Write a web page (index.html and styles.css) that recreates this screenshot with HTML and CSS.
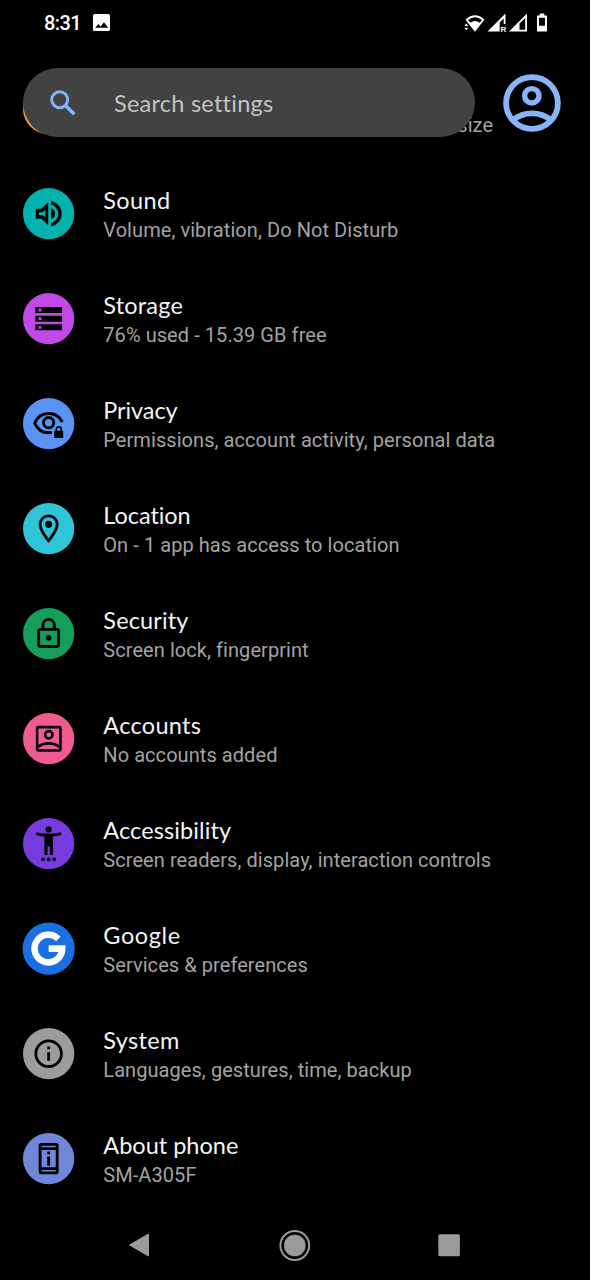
FILE: index.html
```html
<!DOCTYPE html>
<html lang="en">
<head>
<meta charset="utf-8">
<title>Settings</title>
<link rel="stylesheet" href="styles.css">
</head>
<body>
<div class="screen">
  <div class="status">
    <span class="clock">8:31</span>
    <svg class="picture" viewBox="0 0 16 16"><path fill="#fff" fill-rule="evenodd" d="M1.500 0h13A1.500 1.500 0 0 1 16 1.500v13a1.500 1.500 0 0 1-1.500 1.500h-13A1.500 1.500 0 0 1 0 14.500v-13A1.500 1.500 0 0 1 1.500 0zM2 13h12.300l-4-5.300-3 4-2.200-2.400z"/></svg>
    <svg class="signals" viewBox="0 0 86 20" fill="#fff">
      <path d="M1.500 6.500Q11-2.200 20.500 6.500L11 18.700 5.500 12z"/>
      <path fill="#000" d="M4 7Q11 1.500 18 7L15.700 9.700Q11 6.200 6.300 9.700z"/>
      <path d="M.3 13l2-2.500 2 2.500zM.3 14.700h4l-2 2.500z"/>
      <path fill-rule="evenodd" d="M23.500 18.500L41.500.5V11h-1.800V5.500l-4 4v9z"/>
      <text class="roaming" x="36.500" y="18.500">R</text>
      <path fill-rule="evenodd" d="M45 18.500L63 .5v18zM55.500 10.500V16.700h5.700V4.900z"/>
      <path fill-rule="evenodd" d="M73 2.500h2.700V.5h4.600v2H83v16H73zM75 4.800v8h6v-8z"/>
    </svg>
  </div>

  <div class="header">
    <div class="search">
      <svg class="magnifier" viewBox="0 0 26 26" fill="none" stroke="#8ab4f8"><circle cx="9.700" cy="9.700" r="8" stroke-width="2.900"/><path d="M15.500 15.500l8.800 8.800" stroke-width="3.400"/></svg>
      <span class="search-text">Search settings</span>
    </div>
    <svg class="avatar" viewBox="0 0 58 58" fill="none" stroke="#8ab4f8" stroke-width="5.800"><circle cx="29" cy="29" r="25.900"/><circle cx="28.800" cy="21.800" r="7.200" stroke-width="5.400"/><path d="M10.500 46Q18 39.300 29 39.300T47.500 46"/></svg>
  </div>

  <div class="list">
    <div class="row">
      <svg class="icon" viewBox="0 0 36 36"><circle cx="18" cy="18" r="18" fill="#f29a38"/></svg>
      <div class="label peek"><span class="sub">size</span></div>
    </div>
    <div class="row">
      <svg class="icon" viewBox="0 0 36 36"><circle cx="18" cy="18" r="18" fill="#03b1ae"/><path transform="translate(6 6)" d="M3 8.500v7h4l4.700 4.600V3.900L7 8.500H3zm6.700.8v5.400L7.830 13H5.200v-2h2.630zM16.500 12c0-1.770-1.020-3.290-2.800-4.030v8.050c1.780-.73 2.800-2.250 2.800-4.020zM13.700 3.200v2.300c2.890.86 5 3.340 5 6.500s-2.110 5.650-5 6.500v2.300c4.310-.91 7.500-4.490 7.500-8.800s-3.190-7.890-7.500-8.800z"/></svg>
      <div class="label"><span class="title t-sound">Sound</span><span class="sub">Volume, vibration, Do Not Disturb</span></div>
    </div>
    <div class="row">
      <svg class="icon" viewBox="0 0 36 36"><circle cx="18" cy="18" r="18" fill="#bf4ae6"/><path transform="translate(6 6)" fill-rule="evenodd" d="M2.600 3.800h18.800V8H2.600zM2.600 9.900h18.800v4.200H2.600zM2.600 16h18.800v4.200H2.600zM4.900 4.900v2h2v-2zM4.900 11v2h2v-2zM4.900 17.100v2h2v-2z"/></svg>
      <div class="label"><span class="title t-storage">Storage</span><span class="sub">76% used - 15.39 GB free</span></div>
    </div>
    <div class="row">
      <svg class="icon" viewBox="0 0 36 36"><circle cx="18" cy="18" r="18" fill="#5b93f5"/><g transform="translate(6 6)"><path fill="none" stroke="#000" stroke-width="2.100" d="M14.200 18.100Q12.800 18.400 12 18.400C7.500 18.400 4 15.700 2.200 11.600 4 7.500 7.500 4.900 12 4.900c4.200 0 7.700 2.200 9.600 6"/><circle cx="12" cy="11.300" r="3.600" fill="none" stroke="#000" stroke-width="2"/><path fill-rule="evenodd" d="M16 17h.8v-1a2.300 2.300 0 0 1 4.600 0v1h.8v5H16zM18 17h2.200v-1a1.100 1.100 0 0 0-2.200 0z"/></g></svg>
      <div class="label"><span class="title t-privacy">Privacy</span><span class="sub">Permissions, account activity, personal data</span></div>
    </div>
    <div class="row">
      <svg class="icon" viewBox="0 0 36 36"><circle cx="18" cy="18" r="18" fill="#2fc5d8"/><path transform="translate(6 6)" d="M12 2C8.130 2 5 5.130 5 9c0 5.250 7 13 7 13s7-7.750 7-13c0-3.870-3.130-7-7-7zM7 9c0-2.760 2.240-5 5-5s5 2.240 5 5c0 2.880-2.880 7.190-5 9.880C9.920 16.210 7 11.850 7 9zM12 6.500a2.500 2.500 0 1 0 0 5 2.500 2.500 0 0 0 0-5z"/></svg>
      <div class="label"><span class="title t-location">Location</span><span class="sub">On - 1 app has access to location</span></div>
    </div>
    <div class="row">
      <svg class="icon" viewBox="0 0 36 36"><circle cx="18" cy="18" r="18" fill="#149e5a"/><path transform="translate(6 6)" d="M18 8h-1V6c0-2.760-2.240-5-5-5S7 3.240 7 6v2H6c-1.100 0-2 .9-2 2v10c0 1.100.9 2 2 2h12c1.100 0 2-.9 2-2V10c0-1.100-.9-2-2-2zM9 6c0-1.660 1.340-3 3-3s3 1.340 3 3v2H9V6zm9 14H6V10h12v10zm-6-3c1.100 0 2-.9 2-2s-.9-2-2-2-2 .9-2 2 .9 2 2 2z"/></svg>
      <div class="label"><span class="title t-security">Security</span><span class="sub">Screen lock, fingerprint</span></div>
    </div>
    <div class="row">
      <svg class="icon" viewBox="0 0 36 36"><circle cx="18" cy="18" r="18" fill="#ef5a91"/><g transform="translate(6 6)" fill="none" stroke="#000" stroke-width="1.800"><rect x="3.900" y="3.900" width="16.400" height="16.400" rx=".8"/><circle cx="12.100" cy="9.300" r="2.600"/><path d="M4.300 17.900Q7.500 15.300 12 15.300t7.700 2.600"/></g></svg>
      <div class="label"><span class="title t-accounts">Accounts</span><span class="sub">No accounts added</span></div>
    </div>
    <div class="row">
      <svg class="icon" viewBox="0 0 36 36"><circle cx="18" cy="18" r="18" fill="#783be0"/><g transform="translate(6 6)"><path d="M20.500 4c-2.610.7-5.670 1-8.500 1S6.110 4.700 3.500 4L3 6c1.860.5 4 .83 6 1v13h2.200v-6h1.600v6H15V7c2-.17 4.140-.5 6-1z"/><circle cx="12" cy="2" r="2.200"/><circle cx="8.100" cy="23" r="1.350"/><circle cx="12" cy="23" r="1.350"/><circle cx="15.900" cy="23" r="1.350"/></g></svg>
      <div class="label"><span class="title t-accessibility">Accessibility</span><span class="sub">Screen readers, display, interaction controls</span></div>
    </div>
    <div class="row">
      <svg class="icon" viewBox="0 0 36 36"><circle cx="18" cy="18" r="18.300" fill="#1a6fe3"/><path fill="none" stroke="#fff" stroke-width="4.600" d="M24.800 11.200A9.700 9.700 0 1 0 27.500 18H18"/></svg>
      <div class="label"><span class="title t-google">Google</span><span class="sub">Services &amp; preferences</span></div>
    </div>
    <div class="row">
      <svg class="icon" viewBox="0 0 36 36"><circle cx="18" cy="18" r="18" fill="#9c9c9c"/><path transform="translate(6 6)" d="M11 7h2v2h-2zm0 4h2v6h-2zm1-9C6.480 2 2 6.480 2 12s4.480 10 10 10 10-4.480 10-10S17.520 2 12 2zm0 18c-4.410 0-8-3.590-8-8s3.590-8 8-8 8 3.590 8 8-3.590 8-8 8z"/></svg>
      <div class="label"><span class="title t-system">System</span><span class="sub">Languages, gestures, time, backup</span></div>
    </div>
    <div class="row">
      <svg class="icon" viewBox="0 0 36 36"><circle cx="18" cy="18" r="18" fill="#6f86d9"/><path transform="translate(6 6)" fill-rule="evenodd" d="M7 1h10a2 2 0 0 1 2 2v18a2 2 0 0 1-2 2H7a2 2 0 0 1-2-2V3a2 2 0 0 1 2-2zM7 2.900V4h10V2.900zM7 6v12h10V6zM7 20v1.100h10V20zM11 7h2v2h-2zM11 10.500h2V17h-2z"/></svg>
      <div class="label"><span class="title t-about">About phone</span><span class="sub">SM-A305F</span></div>
    </div>
  </div>

  <div class="nav">
    <svg class="nav-icon" viewBox="0 0 32 32"><path fill="#9b9b9b" stroke="#9b9b9b" stroke-linejoin="round" d="M6.500 16L25.500 5v22z"/></svg>
    <svg class="nav-icon" viewBox="0 0 32 32"><circle cx="16.800" cy="16.500" r="14.400" fill="none" stroke="#9b9b9b" stroke-width="2"/><circle cx="16.800" cy="16.500" r="10.800" fill="#9b9b9b"/></svg>
    <svg class="nav-icon" viewBox="0 0 32 32"><rect x="5.300" y="5.200" width="21.600" height="22" rx="1.500" fill="#9b9b9b"/></svg>
  </div>
</div>
</body>
</html>
```
FILE: styles.css
```css
* { box-sizing: border-box; }
body { margin: 0; background: #000; }
.screen {
  position: relative;
  display: flex;
  flex-direction: column;
  width: 590px;
  height: 1280px;
  overflow: hidden;
  background: #000;
  font-family: Roboto, sans-serif;
}
svg { display: block; flex: none; overflow: visible; }
.status {
  display: flex;
  align-items: center;
  height: 46px;
  padding: 0 40px 0 44px;
  color: #fff;
}
.clock {
  width: 49px;
  padding-top: 1px;
  font: 500 20px/24px Roboto, sans-serif;
  letter-spacing: -0.600px;
}
.picture { width: 17px; height: 17px; }
.signals { width: 86px; height: 20px; margin-left: auto; }
.roaming { font: 700 8px "Liberation Sans", sans-serif; }
/* Floats above the scrolled list */
.header {
  position: absolute;
  top: 68px;
  left: 23px;
  z-index: 1;
  display: flex;
  align-items: center;
  gap: 28px;
}
.search {
  display: flex;
  align-items: center;
  gap: 38px;
  width: 452px;
  height: 69px;
  padding-left: 27px;
  border-radius: 35px;
  background: #424242;
}
.magnifier { width: 26px; height: 26px; }
.search-text {
  color: #c3c3c3;
  font: 400 23.500px/30px Lato, sans-serif;
  letter-spacing: 0.250px;
  font-variant-ligatures: none;
}
.avatar { width: 58px; height: 58px; }
.list { padding-top: 10.500px; height: 1164.500px; }
.row {
  display: flex;
  align-items: center;
  gap: 29px;
  height: 105px;
  padding-left: 23px;
}
.icon { width: 51.300px; height: 51.300px; }
.label { display: flex; flex-direction: column; gap: 1px; padding-top: 2px; }
.peek { padding: 32px 0 0 354px; }
.title {
  color: #f4f4f4;
  font: 400 23.500px/30px Lato, sans-serif;
  font-variant-ligatures: none;
}
.t-sound { letter-spacing: 0.350px; }
.t-storage { letter-spacing: 0.200px; }
.t-privacy { letter-spacing: -0.100px; }
.t-location { letter-spacing: -0.050px; }
.t-security { letter-spacing: 0.150px; }
.t-accounts { letter-spacing: 0.300px; }
.t-accessibility { letter-spacing: 0.100px; }
.t-google { letter-spacing: 0.600px; }
.t-system { letter-spacing: 0.350px; }
.sub {
  color: #a3a3a3;
  font: 400 20px/28px Roboto, sans-serif;
  letter-spacing: 0.065px;
  white-space: nowrap;
}
.nav {
  display: flex;
  align-items: center;
  justify-content: space-between;
  height: 70px;
  padding: 0 125px 0 123px;
}
.nav-icon { width: 32px; height: 32px; }
```
